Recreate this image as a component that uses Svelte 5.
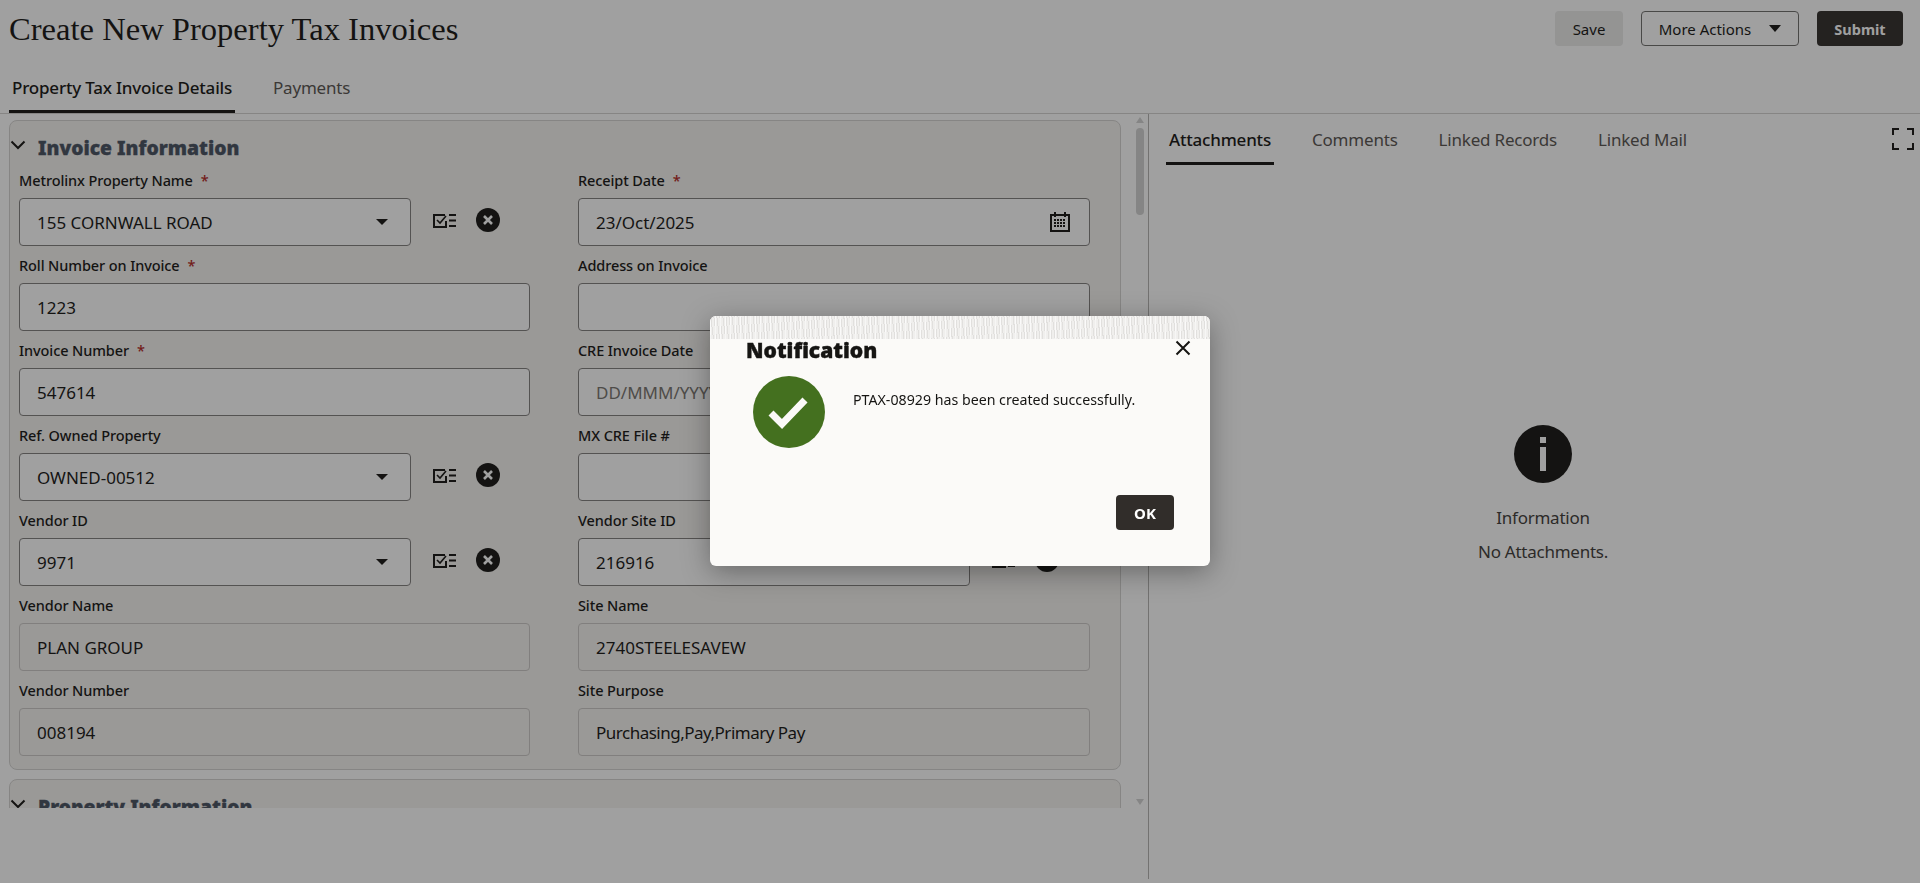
<script>
  const rows = [
    [
      { label: "Metrolinx Property Name", req: true, value: "155 CORNWALL ROAD", kind: "select" },
      { label: "Receipt Date", req: true, value: "23/Oct/2025", kind: "date" },
    ],
    [
      { label: "Roll Number on Invoice", req: true, value: "1223", kind: "text" },
      { label: "Address on Invoice", value: "", kind: "text" },
    ],
    [
      { label: "Invoice Number", req: true, value: "547614", kind: "text" },
      { label: "CRE Invoice Date", value: "", placeholder: "DD/MMM/YYYY", kind: "date" },
    ],
    [
      { label: "Ref. Owned Property", value: "OWNED-00512", kind: "select" },
      { label: "MX CRE File #", value: "", kind: "text" },
    ],
    [
      { label: "Vendor ID", value: "9971", kind: "select" },
      { label: "Vendor Site ID", value: "216916", kind: "select" },
    ],
    [
      { label: "Vendor Name", value: "PLAN GROUP", kind: "readonly" },
      { label: "Site Name", value: "2740STEELESAVEW", kind: "readonly" },
    ],
    [
      { label: "Vendor Number", value: "008194", kind: "readonly" },
      { label: "Site Purpose", value: "Purchasing,Pay,Primary Pay", kind: "readonly", tight: true },
    ],
  ];
  const rightTabs = ["Attachments", "Comments", "Linked Records", "Linked Mail"];
</script>

{#snippet chevron()}
  <svg class="chevron" viewBox="0 0 16 16" width="16" height="16">
    <path d="M1.500 4.500l6.500 6.500 6.500-6.500" fill="none" stroke="#161513" stroke-width="2" />
  </svg>
{/snippet}

{#snippet field(f)}
  <div class="field">
    <div class="label">{f.label}{#if f.req}<span class="req">*</span>{/if}</div>
    <div class="control-row">
      <div class="input" class:readonly={f.kind === "readonly"} class:short={f.kind === "select"}>
        {#if f.placeholder}
          <span class="placeholder">{f.placeholder}</span>
        {:else}
          <span class:tight={f.tight}>{f.value}</span>
        {/if}
        {#if f.kind === "select"}
          <span class="caret"></span>
        {/if}
        {#if f.kind === "date"}
          <svg class="calendar" viewBox="0 0 20 20" width="20" height="20">
            <rect x="1" y="3" width="18" height="16" fill="none" stroke="#161513" stroke-width="2" />
            <path d="M5 0v5M15 0v5" stroke="#161513" stroke-width="2" />
            <path d="M4 8h12M4 11h12M4 14h12" stroke="#161513" stroke-width="2" stroke-dasharray="2 1" />
          </svg>
        {/if}
      </div>
      {#if f.kind === "select"}
        <svg class="picker" viewBox="0 0 23 15" width="23" height="15">
          <path d="M12 2H1v12h12V8" fill="none" stroke="#161513" stroke-width="2" />
          <path d="M4 7l3 3 6-7" fill="none" stroke="#161513" stroke-width="1.6" />
          <path d="M16 2h7M16 7.500h7M16 13h7" stroke="#161513" stroke-width="2" />
        </svg>
        <svg class="clear" viewBox="0 0 24 24" width="24" height="24">
          <circle cx="12" cy="12" r="12" fill="#161513" />
          <path d="M8 8l8 8M16 8l-8 8" stroke="#fff" stroke-width="2.600" />
        </svg>
      {/if}
    </div>
  </div>
{/snippet}

<div class="page">
  <header class="top">
    <h1>Create New Property Tax Invoices</h1>
    <div class="actions">
      <button class="btn save">Save</button>
      <button class="btn more">More Actions<span class="more-caret"></span></button>
      <button class="btn submit">Submit</button>
    </div>
  </header>

  <nav class="tabs main-tabs">
    <span class="tab active">Property Tax Invoice Details</span>
    <span class="tab">Payments</span>
  </nav>

  <main class="split">
    <section class="left">
      <div class="scroller">
        <div class="panel">
          <div class="panel-head">{@render chevron()}<h2>Invoice Information</h2></div>
          {#each rows as row}
            <div class="row">
              {#each row as f}
                {@render field(f)}
              {/each}
            </div>
          {/each}
        </div>
        <div class="panel next">
          <div class="panel-head">{@render chevron()}<h2>Property Information</h2></div>
        </div>
      </div>
      <div class="scrollbar">
        <span class="arrow up"></span>
        <span class="thumb"></span>
        <span class="arrow down"></span>
      </div>
    </section>

    <section class="right">
      <nav class="tabs side-tabs">
        {#each rightTabs as t, i}
          <span class="tab" class:active={i === 0}>{t}</span>
        {/each}
        <svg class="expand" viewBox="0 0 22 22" width="22" height="22">
          <path d="M1 7V1h6M15 1h6v6M21 15v6h-6M7 21H1v-6" fill="none" stroke="#161513" stroke-width="2" />
        </svg>
      </nav>
      <div class="empty">
        <svg viewBox="0 0 58 58" width="58" height="58">
          <circle cx="29" cy="29" r="29" fill="#161513" />
          <rect x="26" y="12" width="6" height="6" fill="#fff" />
          <rect x="26" y="22" width="6" height="24" fill="#fff" />
        </svg>
        <p class="empty-title">Information</p>
        <p>No Attachments.</p>
      </div>
    </section>
  </main>
</div>

<div class="overlay">
  <div class="dialog" role="dialog">
    <div class="strip"></div>
    <div class="dialog-head">
      <h3>Notification</h3>
      <svg class="close" viewBox="0 0 16 16" width="16" height="16">
        <path d="M1.500 1.500l13 13M14.500 1.500l-13 13" stroke="#161513" stroke-width="2" />
      </svg>
    </div>
    <div class="dialog-body">
      <svg viewBox="0 0 72 72" width="72" height="72">
        <circle cx="36" cy="36" r="36" fill="#44701f" />
        <path d="M18 37l11 11 23-24" fill="none" stroke="#fbf9f8" stroke-width="7" />
      </svg>
      <p>PTAX-08929 has been created successfully.</p>
    </div>
    <div class="dialog-foot">
      <button class="btn ok">OK</button>
    </div>
  </div>
</div>

<style>
  :global(body) {
    background: #fff;
    overflow: hidden;
  }

  .page {
    height: 883px;
    font-family: "Noto Sans", sans-serif;
    color: #161513;
    overflow: hidden;
  }

  .top {
    display: flex;
    justify-content: space-between;
    height: 71px;
    padding: 11px 17px 0 9px;
    box-sizing: border-box;
  }

  h1 {
    margin: 0;
    font-family: "Liberation Serif", serif;
    font-weight: 400;
    font-size: 32.600px;
    line-height: 36px;
  }

  .actions {
    display: flex;
    gap: 18px;
    align-items: flex-start;
  }

  .btn {
    height: 35px;
    border-radius: 4px;
    border: 1px solid transparent;
    font-family: inherit;
    font-size: 15px;
    padding: 0;
    color: #161513;
  }

  .save {
    width: 68px;
    background: #ebebea;
  }

  .more {
    width: 158px;
    background: transparent;
    border-color: #6f6e6c;
    display: flex;
    align-items: center;
    justify-content: center;
    gap: 18px;
  }

  .more-caret {
    border: 6.500px solid transparent;
    border-top: 7px solid #161513;
    border-bottom: 0;
  }

  .submit {
    width: 86px;
    background: #312d2a;
    color: #fff;
    font-weight: 700;
    font-size: 14.500px;
  }

  .tabs {
    display: flex;
  }

  .tab {
    color: #57534f;
    font-size: 17px;
    letter-spacing: -0.2px;
  }

  .tab.active {
    color: #161513;
    font-weight: 500;
    border-bottom: 3px solid #161513;
    border-radius: 3px 3px 0 0;
  }

  .main-tabs {
    height: 42px;
    gap: 35px;
    padding-left: 9px;
  }

  .main-tabs .tab {
    padding: 4px 3px 0;
    height: 35px;
    line-height: 26px;
  }

  .split {
    display: flex;
    height: 765px;
    border-top: 1px solid #d4d3d1;
  }

  .left {
    display: flex;
    width: 1149px;
    height: 765px;
    flex: none;
    box-sizing: border-box;
    border-right: 1px solid #b4b3b1;
    padding-left: 9px;
  }

  .scroller {
    width: 1112px;
    height: 694px;
    padding-top: 6px;
    box-sizing: border-box;
    overflow: hidden;
  }

  .panel {
    height: 650px;
    box-sizing: border-box;
    background: #f5f3f0;
    border: 1px solid #d4d3d1;
    border-radius: 8px;
  }

  .panel.next {
    margin-top: 9px;
  }

  .panel-head {
    display: flex;
    align-items: center;
    gap: 12px;
    height: 50px;
    padding-top: 2px;
    box-sizing: border-box;
  }

  .chevron {
    margin-top: -5px;
  }

  h2 {
    margin: 0;
    font-size: 19.300px;
    font-weight: 900;
    -webkit-text-stroke: 0.3px #47505f;
    color: #47505f;
  }

  .row {
    display: grid;
    grid-template-columns: 511px 512px;
    gap: 48px;
    padding-left: 9px;
  }

  .field {
    height: 85px;
  }

  .label {
    height: 27px;
    line-height: 19px;
    font-size: 14.500px;
    font-weight: 500;
    letter-spacing: -0.1px;
  }

  .req {
    color: #b3261e;
    margin-left: 8px;
  }

  .control-row {
    display: flex;
    align-items: center;
  }

  .input {
    flex: 1;
    height: 48px;
    box-sizing: border-box;
    display: flex;
    align-items: center;
    justify-content: space-between;
    padding: 0 17px;
    background: #fff;
    border: 1px solid #817f7d;
    border-radius: 4px;
    font-size: 17px;
  }

  .input.short {
    flex: none;
    width: 392px;
  }

  .input.readonly {
    background: transparent;
    border-color: #cbc9c6;
  }

  .tight {
    letter-spacing: -0.5px;
  }

  .placeholder {
    color: #77736e;
  }

  .caret {
    border: 6px solid transparent;
    border-top: 6px solid #161513;
    border-bottom: 0;
    margin-right: 5px;
  }

  .calendar {
    margin-right: 2px;
  }

  .picker {
    margin: -4px 0 0 22px;
  }

  .clear {
    margin: -4px 0 0 20px;
  }

  .scrollbar {
    display: flex;
    flex-direction: column;
    align-items: center;
    width: 8px;
    height: 694px;
    margin-left: 15px;
    padding-top: 3px;
    box-sizing: border-box;
  }

  .thumb {
    width: 8px;
    height: 87px;
    margin-top: 5px;
    border-radius: 4px;
    background: #d2d2d2;
  }

  .arrow {
    border: 4px solid transparent;
  }

  .arrow.up {
    border-top: 0;
    border-bottom: 6px solid #d2d2d2;
  }

  .arrow.down {
    border-bottom: 0;
    border-top: 6px solid #d2d2d2;
    margin-top: auto;
    margin-bottom: 3px;
  }

  .right {
    flex: 1;
    margin: -1px 0 0 17px;
    border-top: 1px solid #d4d3d1;
    height: 765px;
  }

  .side-tabs {
    position: relative;
    height: 51px;
    gap: 35px;
  }

  .side-tabs .tab {
    padding: 13px 3px 0;
    height: 35px;
    line-height: 26px;
    box-sizing: content-box;
  }

  .expand {
    position: absolute;
    right: 6px;
    top: 14px;
  }

  .empty {
    display: flex;
    flex-direction: column;
    align-items: center;
    padding-top: 260px;
    font-size: 17px;
    letter-spacing: -0.25px;
    color: #3e3b38;
  }

  .empty p {
    margin: 0;
    line-height: 24px;
  }

  .empty-title {
    margin-top: 23px !important;
    padding-bottom: 10px;
  }

  .overlay {
    position: fixed;
    inset: 0;
    padding-bottom: 1px;
    display: flex;
    align-items: center;
    justify-content: center;
    background: rgba(18, 18, 18, 0.4);
    font-family: "Noto Sans", sans-serif;
  }

  .dialog {
    position: relative;
    width: 500px;
    height: 250px;
    display: flex;
    flex-direction: column;
    background: #fbfaf8;
    border-radius: 6px;
    box-shadow: 0 6px 28px rgba(0, 0, 0, 0.35);
    overflow: hidden;
    color: #161513;
  }

  .strip {
    height: 23px;
    flex: none;
    background-color: #f0efed;
    background-image:
      repeating-linear-gradient(90deg, rgba(255, 255, 255, 0.7) 0 1px, transparent 1px 5px),
      repeating-linear-gradient(83deg, rgba(190, 188, 186, 0.3) 0 1px, transparent 1px 3px);
  }

  .dialog-head {
    display: flex;
    justify-content: space-between;
    padding: 0 19px 0 36px;
    height: 30px;
  }

  h3 {
    margin: -3px 0 0;
    font-size: 21px;
    font-weight: 900;
    -webkit-text-stroke: 0.4px #161513;
    line-height: 28px;
  }

  .close {
    margin-top: 1px;
  }

  .dialog-body {
    display: flex;
    padding: 7px 0 0 43px;
    gap: 28px;
    height: 126px;
    box-sizing: border-box;
  }

  .dialog-body p {
    margin: 12px 0 0;
    font-size: 14.200px;
    line-height: 24px;
  }

  .dialog-foot {
    display: flex;
    justify-content: flex-end;
    padding-right: 36px;
  }

  .ok {
    width: 58px;
    background: #312d2a;
    color: #fff;
    font-weight: 700;
  }
</style>
